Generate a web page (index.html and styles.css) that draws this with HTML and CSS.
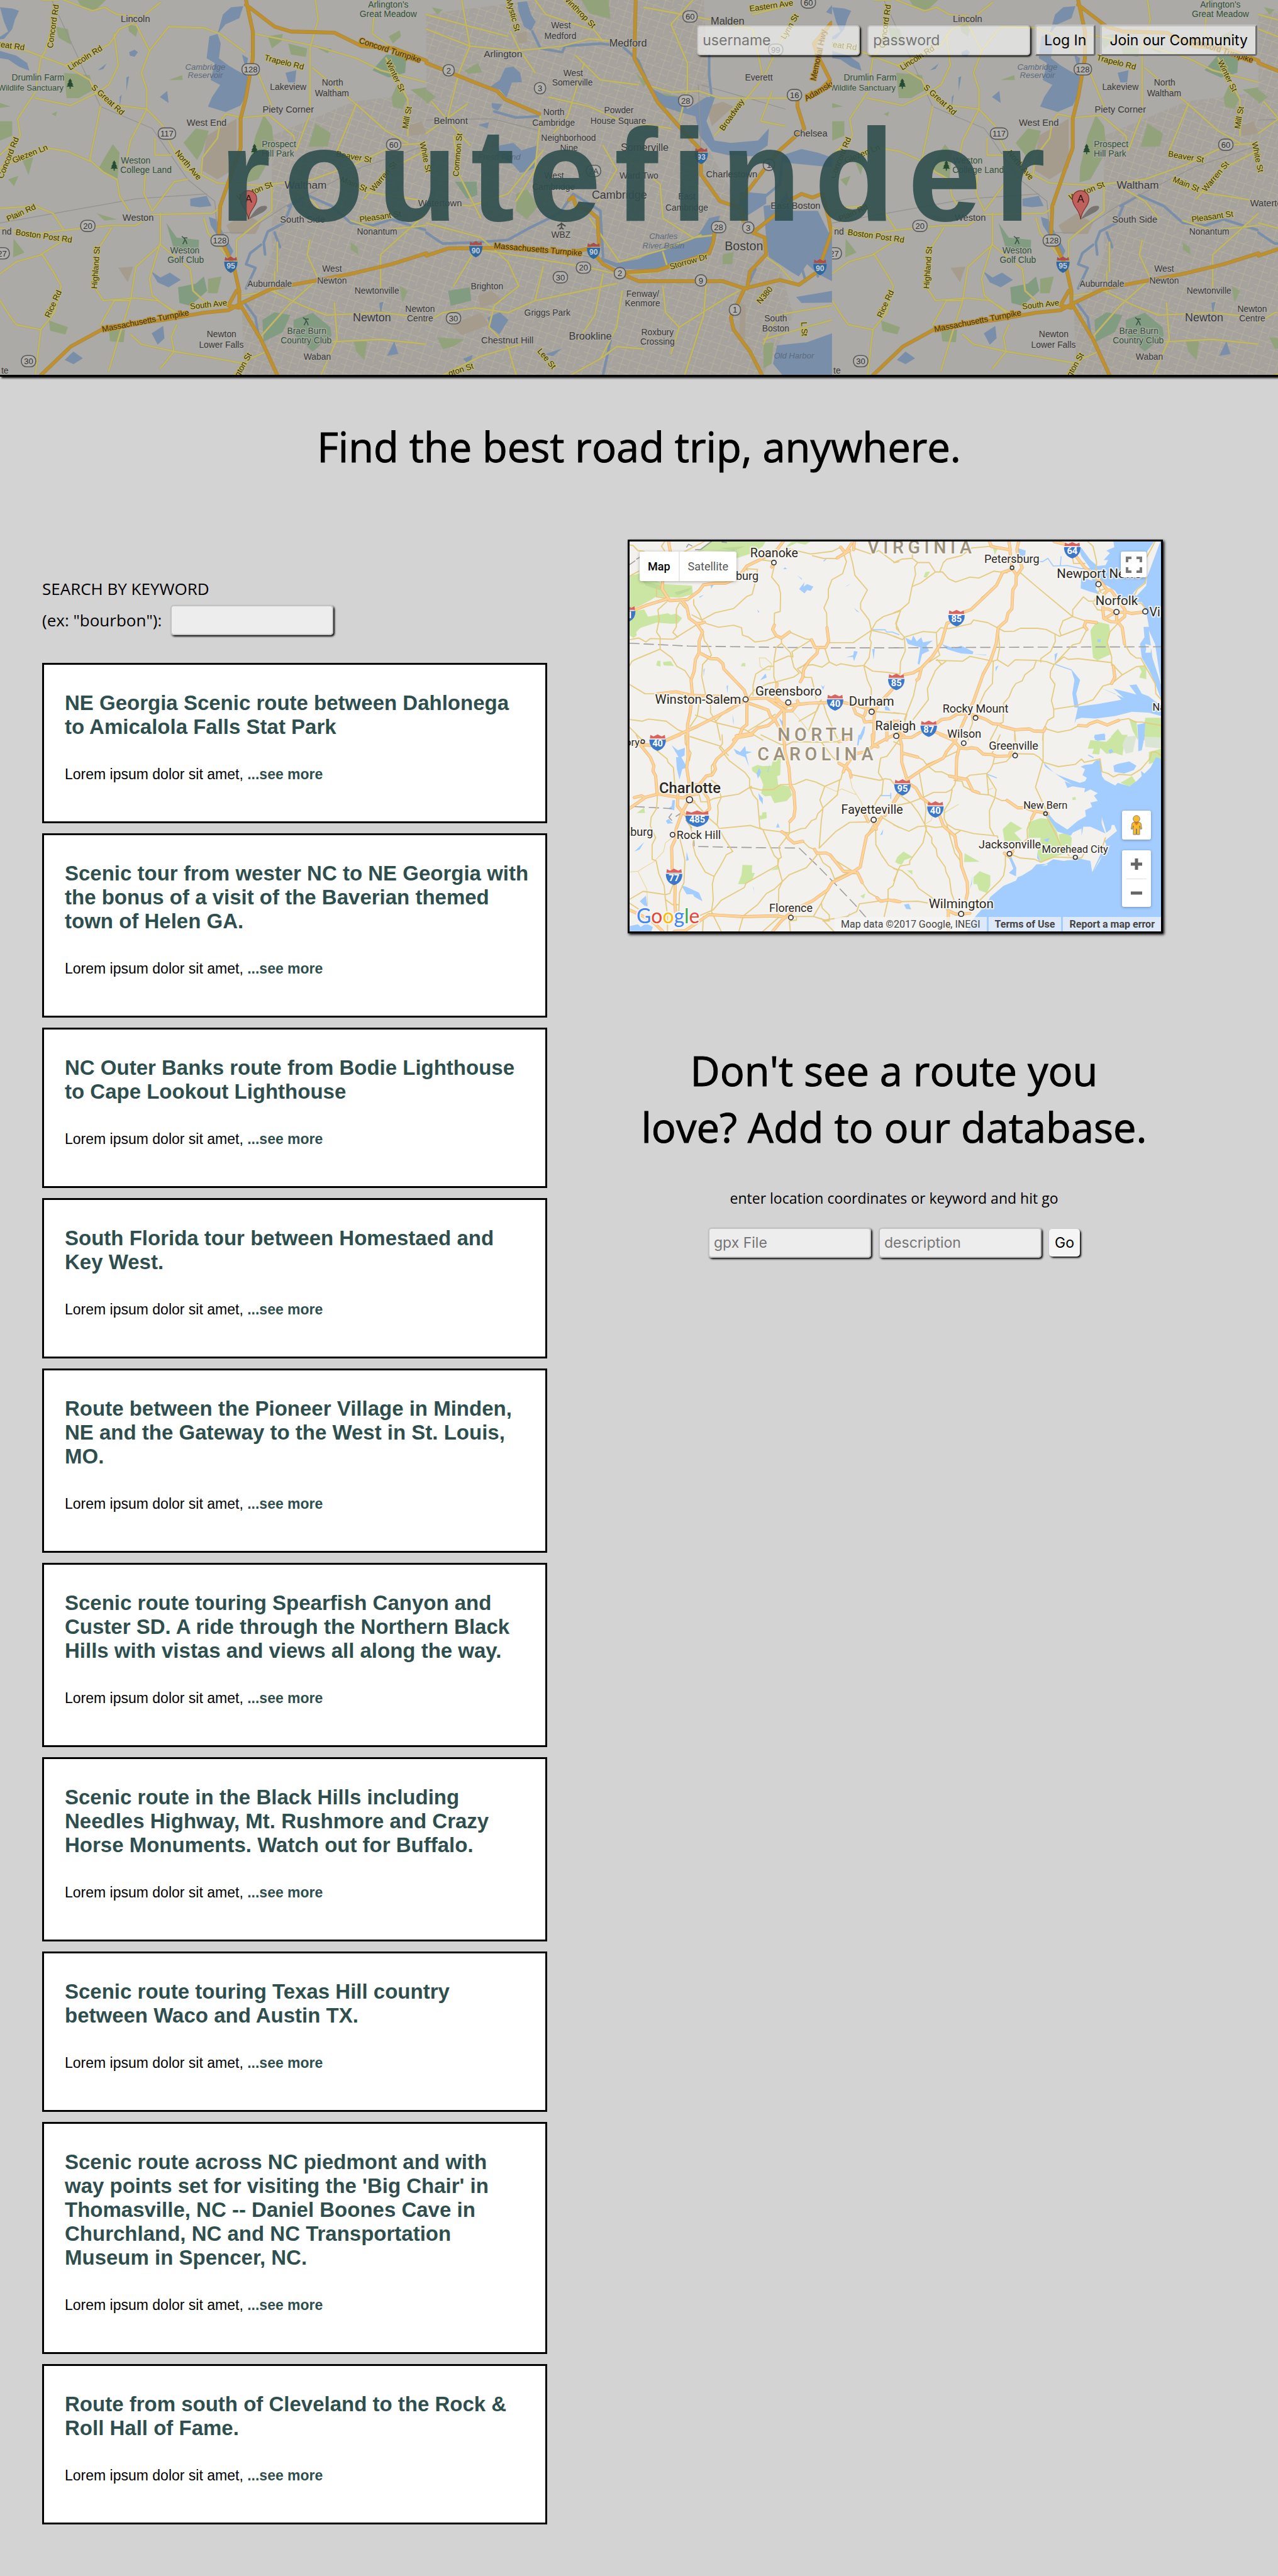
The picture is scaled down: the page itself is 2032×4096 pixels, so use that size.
FILE: index.html
```html
<!DOCTYPE html>
<html lang="en">
<head>
<meta charset="utf-8">
<meta name="viewport" content="width=device-width, initial-scale=1">
<title>routefinder</title>
<link rel="stylesheet" href="styles.css">
</head>
<body>
<header class="banner">
  <svg class="banner-map" id="banner-map" viewBox="0 0 2488 730" preserveAspectRatio="xMinYMin slice" aria-hidden="true"></svg>
  <form class="login">
    <input class="field" type="text" placeholder="username" aria-label="username">
    <input class="field" type="password" placeholder="password" aria-label="password">
    <button class="bevel" type="button">Log In</button>
    <button class="bevel" type="button">Join our Community</button>
  </form>
  <h1 class="brand">routefinder</h1>
</header>

<main>
  <h2 class="headline">Find the best road trip, anywhere.</h2>
  <div class="columns">
    <section class="routes">
      <form class="search">
        <label class="search-label" for="keyword">SEARCH BY KEYWORD</label>
        <div class="search-row">
          <label for="keyword">(ex: "bourbon"):</label>
          <input class="field" id="keyword" type="text">
        </div>
      </form>
      <article class="card"><h3>NE Georgia Scenic route between Dahlonega to Amicalola Falls Stat Park</h3><p>Lorem ipsum dolor sit amet, <a href="#">...see more</a></p></article>
      <article class="card"><h3>Scenic tour from wester NC to NE Georgia with the bonus of a visit of the Baverian themed town of Helen GA.</h3><p>Lorem ipsum dolor sit amet, <a href="#">...see more</a></p></article>
      <article class="card"><h3>NC Outer Banks route from Bodie Lighthouse to Cape Lookout Lighthouse</h3><p>Lorem ipsum dolor sit amet, <a href="#">...see more</a></p></article>
      <article class="card"><h3>South Florida tour between Homestaed and Key West.</h3><p>Lorem ipsum dolor sit amet, <a href="#">...see more</a></p></article>
      <article class="card"><h3>Route between the Pioneer Village in Minden, NE and the Gateway to the West in St. Louis, MO.</h3><p>Lorem ipsum dolor sit amet, <a href="#">...see more</a></p></article>
      <article class="card"><h3>Scenic route touring Spearfish Canyon and Custer SD. A ride through the Northern Black Hills with vistas and views all along the way.</h3><p>Lorem ipsum dolor sit amet, <a href="#">...see more</a></p></article>
      <article class="card"><h3>Scenic route in the Black Hills including Needles Highway, Mt. Rushmore and Crazy Horse Monuments. Watch out for Buffalo.</h3><p>Lorem ipsum dolor sit amet, <a href="#">...see more</a></p></article>
      <article class="card"><h3>Scenic route touring Texas Hill country between Waco and Austin TX.</h3><p>Lorem ipsum dolor sit amet, <a href="#">...see more</a></p></article>
      <article class="card"><h3>Scenic route across NC piedmont and with way points set for visiting the 'Big Chair' in Thomasville, NC -- Daniel Boones Cave in Churchland, NC and NC Transportation Museum in Spencer, NC.</h3><p>Lorem ipsum dolor sit amet, <a href="#">...see more</a></p></article>
      <article class="card"><h3>Route from south of Cleveland to the Rock &amp; Roll Hall of Fame.</h3><p>Lorem ipsum dolor sit amet, <a href="#">...see more</a></p></article>
    </section>

    <section class="explore">
      <div class="map">
        <svg class="map-canvas" id="route-map" viewBox="1226 1054 1034 758" preserveAspectRatio="xMidYMid slice" aria-hidden="true"></svg>
        <div class="map-types">
          <button class="map-type current" type="button">Map</button>
          <button class="map-type" type="button">Satellite</button>
        </div>
        <button class="map-control fullscreen" type="button" aria-label="Toggle fullscreen">
          <svg viewBox="0 0 26 26" width="26" height="26"><path d="M2 9V2h7M17 2h7v7M24 17v7h-7M9 24H2v-7" fill="none" stroke="#777" stroke-width="4"/></svg>
        </button>
        <button class="map-control pegman" type="button" aria-label="Street view">
          <svg viewBox="0 0 18 32" width="18" height="32"><path d="M5 11h8l3 2 1.500 9-2 .5L14 17v14H9.500v-9h-1v9H4V17l-1.500 5.500-2-.5L2 13z" fill="#fbbb2d" stroke="#6d6a5f" stroke-width=".8"/><path d="M5 11.500h8l-4 5z" fill="#e3781c"/><circle cx="9" cy="6" r="5.300" fill="#fbbb2d" stroke="#6d6a5f" stroke-width=".8"/></svg>
        </button>
        <div class="map-control zoom">
          <button type="button" aria-label="Zoom in"><svg viewBox="0 0 18 18" width="18" height="18"><path d="M9 0v18M0 9h18" stroke="#666" stroke-width="5"/></svg></button>
          <button type="button" aria-label="Zoom out"><svg viewBox="0 0 18 18" width="18" height="18"><path d="M0 9h18" stroke="#666" stroke-width="5"/></svg></button>
        </div>
        <div class="map-legal">
          <span>Map data ©2017 Google, INEGI</span>
          <a href="#">Terms of Use</a>
          <a href="#">Report a map error</a>
        </div>
      </div>
      <div class="contribute">
        <h2>Don't see a route you<br>love? Add to our database.</h2>
        <p>enter location coordinates or keyword and hit go</p>
        <form class="contribute-form">
          <input class="field" type="text" placeholder="gpx File" aria-label="gpx File">
          <input class="field" type="text" placeholder="description" aria-label="description">
          <button class="go" type="button">Go</button>
        </form>
      </div>
    </section>
  </div>
</main>
<script src="maps.js"></script>
</body>
</html>
```
FILE: styles.css
```css
* { box-sizing: border-box; }

body {
  margin: 0;
  background: #d3d3d3;
  color: #000;
  font-family: "Open Sans", "Noto Sans", sans-serif;
}

h1, h2, h3, p { margin: 0; font-weight: 400; }

/* Banner */
.banner {
  position: relative;
  padding: 39px 33px 197px;
  border-bottom: 3px solid #000;
  box-shadow: 2px 2px 3px #000;
}
.banner-map {
  position: absolute;
  inset: 0;
  width: 100%;
  height: 100%;
  background: #abaaa6;
}
.banner-map text { font-family: "Liberation Sans", Arial, sans-serif; }
.login {
  position: relative;
  display: flex;
  justify-content: flex-end;
  align-items: center;
  gap: 7px;
}
.login .field + .field { margin-left: 5px; }
.brand {
  position: relative;
  margin-top: 70px;
  text-align: center;
  font: 700 209px/240px "Liberation Sans", Arial, sans-serif;
  letter-spacing: 21px;
  font-variant-ligatures: none;
  color: rgba(47, 79, 79, .9);
}

/* Form controls */
.field, .bevel, .go {
  font-family: Inter, Roboto, sans-serif;
  font-size: 23px;
  line-height: 28px;
  color: #000;
}
.field {
  width: 259px;
  height: 48px;
  padding: 0 7px;
  border: 2px solid #c2c2c2;
  border-radius: 5px;
  background: rgba(255, 255, 255, .6);
  background-clip: padding-box;
  box-shadow: 2px 2px 3px #000;
}
.login .field { border-color: rgba(215, 215, 215, .5); }
.field::placeholder { color: #757575; opacity: 1; }
.bevel {
  height: 50px;
  padding: 0 12px;
  border: 3px solid;
  border-color: #c0c0c0 #6f6f6f #6f6f6f #bcbcbc;
  border-radius: 4px;
  background: rgba(255, 255, 255, .6);
  background-clip: padding-box;
}
.go {
  height: 44px;
  padding: 0 9px;
  border: 0;
  border-radius: 5px;
  background: #f5f5f5;
  box-shadow: 2px 2px 3px #000;
}

/* Page body */
.headline, .contribute h2 {
  font-size: 65px;
  line-height: 90px;
  text-align: center;
  -webkit-text-stroke: 1px #000;
}
.headline { margin: 66px 0 103px; }
.columns {
  display: grid;
  grid-template-columns: minmax(0, 803fr) minmax(0, 851fr);
  align-items: start;
  gap: 128px;
  padding: 0 183px 84px 67px;
}
.routes {
  display: flex;
  flex-direction: column;
  gap: 16px;
  padding-top: 60px;
}
.search {
  margin-bottom: 28px;
  font-size: 26px;
  line-height: 36px;
}
.search-label { display: block; margin-bottom: 8px; }
.search-row { display: flex; align-items: center; gap: 14px; }

.card {
  padding: 42px 24px 61px 33px;
  border: 3px solid #000;
  background: #fff;
  font-family: "Liberation Sans", Arial, sans-serif;
}
.card h3 {
  margin-bottom: 43px;
  font-size: 33px;
  line-height: 38px;
  font-weight: 700;
  color: #2f4f4f;
}
.card p { font-size: 23px; line-height: 27px; }
.card a { color: #2f4f4f; font-weight: 700; text-decoration: none; }

/* Map */
.map {
  position: relative;
  aspect-ratio: 851 / 626;
  overflow: hidden;
  border: 3px solid #000;
  box-shadow: 2px 2px 4px #000;
  font-family: Roboto, sans-serif;
}
.map-canvas {
  display: block;
  width: 100%;
  height: 100%;
  background: #f2f1ed;
}
.map-canvas text { font-family: Roboto, sans-serif; }
.map-canvas .logo { font-family: Lato, sans-serif; }
.map button { border: 0; background: none; padding: 0; font-family: inherit; }
.map-types {
  position: absolute;
  top: 16px;
  left: 16px;
  display: flex;
  border-radius: 3px;
  background: #fff;
  box-shadow: 0 1px 5px rgba(0, 0, 0, .3);
}
.map .map-type {
  height: 47px;
  padding: 0 13px;
  font-size: 18px;
  line-height: 24px;
  color: #565656;
}
.map .map-type.current {
  border-right: 2px solid #e8e8e8;
  font-weight: 500;
  color: #000;
}
.map .map-control {
  position: absolute;
  display: flex;
  align-items: center;
  justify-content: center;
  border-radius: 3px;
  background: #fff;
  box-shadow: 0 1px 4px rgba(0, 0, 0, .3);
}
.map .fullscreen { top: 16px; right: 23px; width: 41px; height: 41px; }
.map .pegman { right: 16px; bottom: 146px; width: 46px; height: 46px; }
.map .zoom {
  right: 16px;
  bottom: 39px;
  flex-direction: column;
  width: 46px;
  height: 90px;
}
.zoom button {
  display: flex;
  flex: 1;
  align-items: center;
  justify-content: center;
  width: 32px;
}
.map .zoom button + button { border-top: 1px solid #e0e0e0; }
.map-legal {
  position: absolute;
  right: 0;
  bottom: 0;
  display: flex;
  gap: 3px;
  font-size: 16px;
  line-height: 23px;
  color: #444;
}
.map-legal > * {
  padding: 0 10px;
  background: rgba(245, 245, 245, .7);
  color: #444;
  text-decoration: none;
}
.map-legal a { font-weight: 700; }

/* Contribute */
.contribute { margin: 173px 4px 0 0; text-align: center; }
.contribute p { margin: 53px 0 31px; font-size: 23px; line-height: 31px; }
.contribute-form {
  display: flex;
  justify-content: center;
  align-items: center;
  gap: 12px;
}
```
FILE: maps.js
```js
// Draws the two road maps. Each sheet lists its features in its own grid;
// x, y, sx, sy place that grid on the map.
const NS = 'http://www.w3.org/2000/svg';

function el(parent, name, attrs, text) {
  const node = document.createElementNS(NS, name);
  for (const key in attrs) node.setAttribute(key, attrs[key]);
  if (text) node.textContent = text;
  parent.append(node);
  return node;
}
const px = (s, x) => s.x + x * s.sx;
const py = (s, y) => s.y + y * s.sy;

// "x,y x,y | x,y x,y" -> path data in map units
function trace(s, lines, close) {
  return lines.trim().split('|').map(line => 'M' + line.trim().split(/\s+/).map(p => {
    const [x, y] = p.split(',').map(Number);
    return px(s, x).toFixed(1) + ',' + py(s, y).toFixed(1);
  }).join('L') + (close ? 'Z' : '')).join('');
}
function fill(g, s, lines, color) {
  if (lines) el(g, 'path', { d: trace(s, lines, true), fill: color });
}
function stroke(g, s, lines, color, width, dash) {
  if (!lines) return;
  const a = { d: trace(s, lines), fill: 'none', stroke: color, 'stroke-width': width, 'stroke-linejoin': 'round', 'stroke-linecap': dash ? 'butt' : 'round' };
  if (dash) a['stroke-dasharray'] = dash;
  el(g, 'path', a);
}
function shield(g, x, y, text, w, font, colors) {
  const h = 16, k = w / 2;
  el(g, 'path', { d: `M${x - k},${y - 6} L${x + k},${y - 6} Q${x + k},${y + 11} ${x},${y + h} Q${x - k},${y + 11} ${x - k},${y - 6}Z`, fill: colors[0] });
  el(g, 'path', { d: `M${x - k + 1},${y - 8} L${x - k + 2},${y - 15} L${x - k / 2},${y - 12} L${x},${y - 16} L${x + k / 2},${y - 12} L${x + k - 2},${y - 15} L${x + k - 1},${y - 8}Z`, fill: colors[1] });
  el(g, 'text', { x, y: y + 8, 'text-anchor': 'middle', 'font-size': font, 'font-weight': 700, fill: colors[2] }, text);
}

/* ---------- Banner: greater Boston, repeated across the width ---------- */
const west = { x: 0, y: 0, sx: .5293, sy: .4719 };
const east = { x: 830, y: 0, sx: .5293, sy: .4719 };

const boston = [
  { s: west,
    water: `0,30 45,35 70,45 55,80 45,120 15,160 0,162 0,152 30,130 15,90 | 0,210 60,230 100,260 108,292 70,275 30,245 0,240 | 770,150 800,140 812,180 805,240 840,270 870,290 920,320 905,390 885,435 830,462 765,440 780,400 810,350 775,330 790,260 760,240 | 800,140 820,60 850,30 895,25 880,75 830,100 | 475,215 495,205 507,215 495,234 478,230 | 360,290 392,262 380,285 | 1050,300 1090,290 1085,340 1060,340 | 588,400 615,375 620,425 | 465,320 475,315 465,375 | 440,400 448,390 440,440 | 700,820 760,808 778,850 735,855 700,850 | 768,895 795,905 820,960 858,1035 845,1065 810,990 775,930 | 555,1118 590,1145 625,1125 665,1155 620,1185 580,1165 | 238,1485 270,1450 305,1478 270,1502 | 558,1375 600,1345 605,1395 580,1422 | 1424,1468 1450,1408 1465,1460 | 890,225 912,240 905,290 | 1395,1250 1410,1245 1400,1300`,
    river: `1070,850 1045,920 985,955 970,1000 975,1050 | 960,1010 920,1045 905,1090 940,1105 905,1190 | 900,1250 940,1310 950,1380 | 1010,960 1030,1020 | 1060,850 1130,805 1220,850 1290,920 1370,930 1440,905 1568,950`,
    park: `205,110 250,120 262,185 215,155 | 470,100 510,110 500,152 475,130 | 285,0 390,0 350,42 300,30 | 235,300 330,310 345,370 290,405 245,405 | 385,650 415,595 440,630 432,742 380,712 365,690 | 675,590 720,530 768,540 745,620 725,660 | 912,690 940,560 970,475 1000,520 1010,620 950,740 910,752 | 1135,605 1160,510 1217,550 1205,605 | 985,150 1040,140 1035,170 1000,200 | 1060,180 1130,200 1125,235 1070,225 | 1440,400 1460,350 1500,400 1480,450 1445,440 | 0,500 45,500 45,560 0,580 | 30,740 68,725 52,768 | 80,655 122,650 105,722 | 50,985 90,1042 48,1062 | 765,1150 815,1140 800,1210 765,1210 | 180,1322 250,1350 240,1380 185,1365 | 400,1360 460,1360 455,1412 405,1408 | 1300,1400 1350,1410 1340,1485 1310,1450 | 620,330 670,310 672,330 | 1510,370 1568,360 1568,420 | 1290,1000 1315,1020 1318,1050 1290,1030 | 190,470 210,460 205,480 | 355,880 430,905 385,910 | 0,425 40,440 0,445 | 1430,150 1470,125 1475,150 1445,180 | 1470,1180 1500,1200 1480,1250 | 1170,200 1220,200 1205,220`,
    wood: `1370,290 1420,225 1495,230 1490,300 1430,320 | 612,920 650,980 732,990 730,1042 640,1030 | 655,1185 720,1170 750,1140 762,1200 700,1262 660,1250 | 965,1320 1010,1288 1068,1300 1040,1370 970,1410 | 1080,1320 1150,1290 1215,1350 1220,1385 1150,1450 1080,1380`,
    tint: `832,930 900,880 960,920 940,965 850,965 | 435,1105 490,1100 470,1165 | 1500,520 1550,500 1568,550 1510,562 | 760,560 870,490 870,690 800,740 740,700`,
    urban: `1000,560 1300,420 1568,380 1568,1548 900,1548 890,1300 1000,1050`,
    rail: `190,0 370,440 560,530 690,740 790,830 800,960 900,960 1050,850 1330,690 1568,600 | 0,920 500,820 760,800`,
    road: `155,0 215,0 | 235,0 340,45 385,30 430,60 500,65 | 215,20 165,215 150,240 130,380 65,490 75,560 0,640 | 0,180 100,210 240,270 330,330 350,380 400,430 540,450 600,520 620,580 680,700 740,720 800,755 960,765 1150,740 1300,680 1450,600 1568,590 | 240,270 400,185 440,120 500,90 590,10 | 500,100 550,210 520,300 540,370 540,450 480,580 460,690 | 550,210 620,110 750,115 810,140 900,215 | 130,405 260,435 360,380 400,350 435,270 420,140 | 370,440 330,660 380,710 430,740 440,810 475,870 | 0,690 170,610 250,625 330,665 | 0,860 130,850 195,880 235,950 | 0,940 110,970 235,950 410,930 500,930 560,885 780,880 820,850 | 560,870 640,750 690,740 | 535,700 530,800 560,870 | 630,640 570,640 570,570 | 410,940 400,960 365,1020 345,1180 380,1240 500,1230 580,1240 650,1290 | 590,880 590,1010 500,1100 480,1240 440,1380 400,1530 | 590,1010 700,1110 710,1200 750,1240 | 590,1000 550,1150 560,1220 640,1290 | 155,1050 195,1120 225,1180 200,1290 150,1360 130,1548 | 155,1050 60,1080 0,1130 | 235,990 150,1050 | 750,900 765,960 830,1050 | 740,720 745,650 800,570 810,500 830,470 890,485 990,475 1080,560 1090,620 | 940,140 1160,190 1310,240 1400,290 1568,340 | 1160,0 1170,80 1140,200 1140,470 1090,620 | 1150,280 1310,430 1420,540 1500,590 | 1310,430 1240,620 | 1420,240 1500,410 1500,560 | 1380,0 1370,140 1460,210 | 920,220 960,330 1000,440 | 1000,770 1000,870 870,990 870,1080 | 1060,770 1150,830 1200,900 | 1250,740 1340,790 1568,830 | 1290,910 1400,950 1568,930 | 1340,820 1430,700 1568,620 | 890,1220 1000,1200 1110,1260 1200,1300 1400,1290 1568,1310 | 950,1400 1060,1260 1170,1150 1130,1050 1140,990 | 1010,1120 1010,1210 | 1568,880 1400,1050 1400,1200 | 650,1340 630,1390 640,1450 750,1470 900,1500 | 480,1380 520,1420 640,1450 590,1520 | 860,1548 920,1480 980,1450 | 0,1240 40,1310 60,1340 150,1360 | 1020,1000 1020,1120 | 1230,1250 1240,1400 1180,1548 | 1220,1410 1400,1400 1568,1420 | 480,1240 420,1240 370,1340`,
    freeway: `905,0 930,130 930,240 905,400 885,490 885,610 850,720 810,850 805,970 860,1100 880,1200 880,1250 960,1400 1020,1548 | 905,20 1010,110 1070,130 1230,135 1330,190 1450,200 1568,250 | 150,1548 260,1430 390,1350 600,1320 750,1290 840,1280 890,1250 1000,1190 1150,1160 1290,1130 1440,1090 1568,1045 | 870,1200 840,1260 880,1270`,
    places: [['Lincoln',498,90,18],['North',1223,354,17],['Waltham',1221,397,17],['Lakeview',1060,370,17],['Piety Corner',1060,465,18],['West End',760,520,18],['Waltham',1124,778,21],['Weston',508,912,18],['South Side',1113,918,18],['Nonantum',1387,968,17],['Auburndale',992,1184,17],['West',1221,1122,17],['Newton',1221,1170,17],['Newtonville',1386,1212,17],['Newton',1368,1327,22],['Newton',1545,1287,17],['Centre',1545,1327,17],['Newton',815,1392,17],['Lower Falls',814,1435,17],['Waban',1167,1484,17],['nd',25,968,17],['te',18,1541,17]],
    parks: [["Arlington's",1428,32,17],['Great Meadow',1428,70,17],['Drumlin Farm',140,333,17],['Wildlife Sanctuary',113,373,16],['Prospect',1026,608,17],['Hill Park',1022,646,17],['Weston',499,675,17],['College Land',537,713,17],['Weston',680,1046,17],['Golf Club',683,1084,17],['Brae Burn',1128,1378,17],['Country Club',1126,1416,17]],
    lakes: [['Cambridge',755,288,16],['Reservoir',755,322,16]],
    streets: [['Concord Rd',205,110,-82],['reat Rd',40,200,8],['Lincoln Rd',318,248,-32],['S Great Rd',390,420,42],['Trapelo Rd',1043,268,14],['Concord Turnpike',1432,218,18],['Winter St',1445,318,64],['Mill St',1507,487,-80],['Glezen Ln',114,645,-22],['Concord Rd',40,655,-68],['North Ave',685,688,50],['Weston St',940,798,-22],['Beaver St',1300,658,10],['Warren St',1418,735,-50],['Main St',1298,770,22],['Pleasant St',1400,905,-8],['Plain Rd',82,888,-25],['Boston Post Rd',160,985,8],['Highland St',362,1105,-86],['Rice Rd',205,1258,-65],['South Ave',768,1268,-6],['Massachusetts Turnpike',537,1335,-11],['gton St',903,1510,-60],['White St',1555,650,78]],
    routes: [['128',922,286],['117',614,551],['128',808,992],['60',1448,597],['20',323,932],['27',8,1045],['30',105,1490]],
    interstates: [['95',849,1092]]
  },
  { s: east,
    water: `335,10 370,5 385,60 402,90 385,127 360,110 340,50 | 235,358 270,330 290,280 320,275 345,300 352,340 315,340 295,402 270,370 | 240,425 280,430 262,456 242,445 | 270,600 320,590 350,620 410,600 400,690 375,705 345,712 320,680 260,640 | 190,515 230,505 225,530 | 820,360 880,395 940,400 960,450 1030,400 1062,400 1030,500 1060,580 1120,590 1220,580 1260,530 1255,600 1200,645 1110,640 1050,625 1005,560 990,480 930,462 870,440 | 1310,640 1380,615 1440,630 1492,650 1492,690 1400,680 1310,670 | 1240,850 1300,840 1325,790 1340,840 1340,870 1440,870 1480,960 1492,930 1492,1160 1440,1130 1400,1090 1370,1140 1340,1120 1260,1060 1250,980 | 640,1060 700,1085 780,1070 870,1020 1000,970 1040,900 1080,890 1060,970 1045,1040 900,1100 850,1117 710,1108 650,1080 | 1492,1375 1400,1412 1290,1425 1275,1500 1310,1548 1492,1548 | 1360,1225 1492,1200 1492,1248 1380,1250 | 225,1310 270,1288 302,1320 268,1380 235,1350 | 435,1462 498,1438 465,1470 | 1155,790 1250,800 1250,840 1180,890 1150,850 | 1492,20 1470,50 1492,60 | 135,1480 170,1465 160,1510`,
    river: `390,130 420,200 500,215 510,190 640,180 720,190 780,250 825,370 | 0,960 60,1005 180,1000 300,990 380,940 490,880 540,800 640,870 650,1060 | 1040,230 1040,310 1050,410 | 650,1548 680,1390 | 250,460 330,485 410,480 | 1380,1100 1395,1160 | 1430,1090 1440,1140 | 1210,1110 1190,1160 | 1225,830 1300,760 1310,650`,
    park: `570,0 670,0 677,77 600,55 | 330,800 370,780 412,850 370,905 330,870 | 40,1392 140,1400 100,1430 60,1440 | 140,292 190,260 205,298 155,305 | 1240,1415 1278,1415 1270,1500 1240,1520 | 1090,1050 1130,1040 1125,1090 1090,1090 | 850,380 940,400 920,430 870,420 | 0,370 35,400 0,430 | 770,300 810,340 800,360 | 20,30 60,40 40,60`,
    wood: `105,750 185,750 188,805 150,820 | 80,1200 160,1185 165,1240 90,1262`,
    tint: `90,1340 200,1290 232,1340 130,1382 | 190,1220 240,1200 282,1240 200,1270 | 1030,440 1090,420 1130,440 1050,520 | 1155,1250 1175,1260 1172,1400 1150,1400 | 330,140 370,130 370,175 340,180`,
    urban: `0,60 400,0 1020,0 1040,400 1010,560 1160,860 1250,1000 1300,1100 1350,1300 1240,1548 0,1548`,
    rail: `0,495 240,490 420,540 | 1000,350 1010,560 1000,760 | 1010,350 1200,410 1320,450 | 640,1070 560,1050`,
    road: `0,120 160,190 330,210 500,190 600,160 765,180 | 130,0 160,190 120,300 80,480 | 0,550 150,430 | 310,130 340,200 400,300 | 400,0 440,60 600,120 | 520,0 600,100 650,170 | 0,60 130,100 300,150 | 420,480 400,700 330,830 | 450,400 600,440 720,500 900,530 | 550,230 640,330 780,350 | 580,260 520,480 460,560 | 810,350 900,380 1000,375 1080,405 1340,405 | 960,370 930,500 | 980,0 900,100 960,260 960,370 | 1040,80 1200,120 1240,330 | 1060,560 1160,430 1240,320 1340,90 | 1200,60 1340,20 | 100,560 120,720 200,900 | 650,600 700,700 630,830 | 720,640 860,760 870,900 980,980 1060,970 | 0,920 200,980 300,1080 340,1180 | 200,1030 580,1100 700,1130 780,1130 860,1120 | 710,1080 600,900 | 870,1040 885,1095 | 710,1080 870,1030 1010,970 | 340,1180 250,1260 230,1350 | 0,1330 60,1290 180,1270 300,1290 400,1240 530,1210 700,1170 | 400,1240 430,1100 | 640,1480 700,1350 720,1200 | 530,1548 640,1480 700,1430 800,1440 | 60,1548 200,1470 350,1420 | 900,1460 930,1350 1100,1230 1150,1200 | 870,1180 880,1290 930,1350 | 1250,1060 1300,1100 1360,1180 | 1240,1400 1492,1320 | 1030,1160 1020,1300 950,1548 | 1270,380 1230,500 1320,520 | 0,830 160,850 300,800 430,620 | 160,600 20,420 | 650,1130 620,1300 560,1400 | 800,30 1040,80 | 1492,1260 1290,1300 1240,1420 | 180,1030 100,1180 | 330,1548 300,1430 230,1350`,
    freeway: `0,1055 80,1025 300,1022 420,1030 520,1045 600,1025 650,1090 710,1125 850,1115 1040,1045 1055,1000 1060,960 | 0,260 200,350 260,375 290,410 415,470 | 770,0 765,240 850,420 920,510 1010,620 1010,720 1080,830 1160,860 1165,910 | 710,1125 780,1160 1090,1160 1170,1190 1300,1155 1370,1175 1440,1120 1490,960 1480,900 1455,800 1420,815 1380,800 1330,830 | 1170,1190 1150,1240 1120,1310 1130,1360 1190,1450 1235,1548 | 1180,1190 1190,1120 1250,1050 1245,980 1200,960 1290,880 | 1160,820 1290,630 1390,530 1365,440 1365,400 | 1400,395 1450,370 1485,330 1440,230 1425,180 1490,95 | 525,825 540,812 550,850 600,870 630,900 635,1010`,
    places: [['West',495,118,17],['Medford',493,160,17],['Medford',742,192,20],['Arlington',282,235,19],['West',540,314,17],['Somerville',537,354,17],['Malden',1108,102,20],['Everett',1223,331,17],['Belmont',90,512,18],['North',469,475,17],['Cambridge',468,520,17],['Powder',708,468,17],['House Square',706,510,17],['Neighborhood',523,580,17],['Nine',525,622,17],['Somerville',803,622,20],['Chelsea',1413,564,18],['Ward Two',782,738,17],['West',470,738,17],['Cambridge',468,784,17],['Cambridge',710,820,22],['East',958,822,17],['Cambridge',958,868,17],['Charlestown',1123,732,18],['East Boston',1358,862,18],['Boston',1168,1032,24],['Brighton',223,1194,17],['Fenway/',796,1224,17],['Kenmore',795,1264,17],['Griggs Park',445,1303,17],['Chestnut Hill',298,1416,18],['Brookline',603,1400,20],['Roxbury',850,1382,17],['Crossing',850,1422,17],['South',1285,1325,17],['Boston',1285,1367,17],['Watertown',50,852,18],['WBZ',495,980,17]],
    parks: [],
    lakes: [['Fresh Pond',268,660,16],['Charles',872,987,16],['River Basin',872,1024,16],['Old Harbor',1352,1478,16]],
    streets: [['Mystic St',310,65,75],['Winthrop St',555,55,45],['Eastern Ave',1270,35,-8],['Lynn St',1345,115,-60],['Broadway',1132,480,-55],['Common St',125,640,-85],['Massachusetts Turnpike',410,1040,5],['Storrow Dr',967,1090,-16],['N380',1252,1225,-50],['L St',1380,1358,88],['Lee St',435,1487,50],['Adamski',1448,385,-30],['Memorial Hwy',1452,230,-78],['gton St',130,1536,-18]],
    routes: [['60',970,68],['60',1405,10],['2',82,290],['3',418,364],['28',954,415],['16',1354,392],['99',1285,205],['28',1075,937],['3',1184,939],['20',578,1104],['2',712,1127],['30',493,1144],['9',1010,1157],['1',1135,1278],['30',100,1313],['2A',615,705],['1',1260,680]],
    interstates: [['90',182,1028],['90',615,1035],['90',1448,1102],['93',1011,643]]
  }
];

function drawBoston(svg, dx, id) {
  const defs = el(svg, 'defs', {});
  const clip = el(defs, 'clipPath', { id });
  el(clip, 'rect', { x: 0, y: 0, width: 1620, height: 730 });
  const grid = el(defs, 'pattern', { id: id + '-grid', width: 34, height: 28, patternUnits: 'userSpaceOnUse', patternTransform: 'rotate(18)' });
  el(grid, 'path', { d: 'M0 8H34M0 20H20M9 0V28M24 8V28M24 8L34 0', fill: 'none', stroke: '#b8b39f', 'stroke-width': 1 });
  const g = el(svg, 'g', { transform: `translate(${dx} 0)`, 'clip-path': `url(#${id})` });
  // labels whose centre lies past the right edge are skipped
  const shown = (s, x) => px(s, x) + dx < 2488;
  el(g, 'rect', { x: 0, y: 0, width: 1620, height: 730, fill: '#abaaa6' });
  boston.forEach(m => {
    fill(g, m.s, m.urban, '#a6a29d');
    fill(g, m.s, m.urban, `url(#${id}-grid)`);
    fill(g, m.s, m.tint, '#a69c8d');
    fill(g, m.s, m.park, '#92a37b');
    fill(g, m.s, m.wood, '#829c82');
    fill(g, m.s, m.water, '#788ea9');
    stroke(g, m.s, m.river, '#788ea9', 5);
    stroke(g, m.s, m.rail, '#929291', 1.5);
    stroke(g, m.s, m.road, '#aea473', 4);
    stroke(g, m.s, m.road, '#c2b965', 2.6);
  });
  boston.forEach(m => stroke(g, m.s, m.freeway, '#a78843', 7.5));
  boston.forEach(m => stroke(g, m.s, m.freeway, '#be912e', 5.5));
  const label = (s, [text, x, y, size], color, halo, extra) => shown(s, x) && el(g, 'text', Object.assign({
    x: px(s, x), y: py(s, y), 'text-anchor': 'middle', 'font-size': size, fill: color,
    stroke: halo, 'stroke-width': 3, 'paint-order': 'stroke'
  }, extra), text);
  boston.forEach(m => {
    m.streets.forEach(([t, x, y, a]) => label(m.s, [t, x, y, 16], '#3a3318', /Turnpike|Adamski|Hwy/.test(t) ? '#be912e' : '#c2b965',
      { transform: `rotate(${a} ${px(m.s, x)} ${py(m.s, y)})` }));
    m.routes.filter(([, x]) => shown(m.s, x)).forEach(([t, x, y]) => {
      const cx = px(m.s, x), cy = py(m.s, y), w = 22 + 6 * (t.length - 1);
      el(g, 'rect', { x: cx - w / 2, y: cy - 11, width: w, height: 22, rx: 10, fill: '#b2b1ae', stroke: '#5a5a5a', 'stroke-width': 2 });
      el(g, 'text', { x: cx, y: cy + 6, 'text-anchor': 'middle', 'font-size': 16, fill: '#333' }, t);
    });
    m.interstates.filter(([, x]) => shown(m.s, x)).forEach(([t, x, y]) => shield(g, px(m.s, x), py(m.s, y), t, 26, 15, ['#2f689f', '#a94e4a', '#c5ccd4']));
    m.places.forEach(p => label(m.s, p, '#3a3937', '#aeaca8'));
    m.parks.forEach(p => label(m.s, p, '#32503b', '#aeaea6'));
    m.lakes.forEach(p => label(m.s, p, '#5d6b7d', 'none', { 'font-style': 'italic', 'stroke-width': 0 }));
  });
  // park trees, golf flags and the marker
  [[258, 345], [936, 615], [420, 683]].forEach(([x, y]) => {
    const a = px(west, x), b = py(west, y);
    el(g, 'path', { d: `M${a},${b - 10}l4,6h-2l4,6h-2l3,4h-6v4h-2v-4h-6l3,-4h-2l4,-6h-2z`, fill: '#274a33' });
  });
  [[680, 990], [1126, 1325]].forEach(([x, y]) => {
    const a = px(west, x), b = py(west, y);
    el(g, 'path', { d: `M${a - 6},${b - 7}l4,3h7M${a - 2},${b - 4}l4,6 2,6M${a},${b}l-4,8`, fill: 'none', stroke: '#3c5546', 'stroke-width': 2 });
  });
  const a = px(west, 914), b = py(west, 905);
  el(g, 'path', { d: `M${a},${b}l12,-16q10,-12 22,-10q6,4 -6,12q-14,8 -28,14z`, fill: '#5a5856', opacity: .65 });
  el(g, 'path', { d: `M${a},${b}c-2,-20 -16,-24 -16,-40a16,16 0 0 1 32,0c0,16 -14,20 -16,40z`, fill: '#c0605c', stroke: '#7a2f2c', 'stroke-width': 1.5 });
  el(g, 'text', { x: a, y: b - 33, 'text-anchor': 'middle', 'font-size': 20, fill: '#1e1111' }, 'A');
  el(g, 'path', { d: `M${px(east, 497)},${py(east, 918)}v10m-8,-3l8,-5 8,5m-12,6l4,-3 4,3`, fill: 'none', stroke: '#4c4a48', 'stroke-width': 2.5 });
}
const banner = document.getElementById('banner-map');
drawBoston(banner, 0, 'tile-a');
drawBoston(banner, 1620, 'tile-b');

/* ---------- Route map: the Carolinas ---------- */
const kx = .34439, ky = .33333;
const nw = { x: 1210, y: 1040, sx: kx, sy: ky }, ne = { x: 1740, y: 1040, sx: kx, sy: ky };
const sw = { x: 1210, y: 1430, sx: kx, sy: ky }, se = { x: 1740, y: 1430, sx: kx, sy: ky };

const carolinas = [
  { s: nw,
    park: `46,242 110,228 240,290 400,300 405,350 330,370 200,362 165,385 100,420 46,440 | 500,42 815,42 800,70 740,110 650,140 600,100 480,95 430,100 | 46,455 130,438 152,480 265,460 280,470 310,462 345,490 320,520 280,522 200,515 110,545 85,570 88,590 70,604 46,590 | 198,765 205,738 222,738 222,772 | 236,745 280,740 298,768 240,765 | 676,770 684,752 700,750 702,770 | 920,85 960,45 1010,42 1070,42 1040,60 990,50`,
    shade: `120,270 230,300 220,325 140,300 | 300,340 400,310 380,330 320,355 | 560,80 700,70 640,95`,
    water: `1005,320 1035,280 1030,305 1050,290 1085,305 1070,330 1050,325 1035,345 | 992,238 1020,258 1020,265 | 915,203 925,192 937,203 | 1262,308 1295,288 1280,300 | 440,365 468,352 445,370 | 505,295 522,295 508,318 | 785,852 815,812 822,835 | 697,852 745,838 | 1270,718 1310,705 1315,680 1335,685 1315,740 1308,715 | 1418,670 1432,668 1425,732 | 1315,430 1345,455 1330,450 | 595,885 604,880 600,930 | 155,855 178,875 | 628,1050 636,1085 634,1112 | 1128,878 1140,890 1150,878 1140,908 | 1370,1120 1378,1120 1372,1160 1355,1200 1340,1190 | 465,790 472,780 466,830 | 768,440 780,450 775,458 | 890,1070 915,1095 910,1120 | 48,1005 80,988 | 1485,990 1510,1010 1520,1030 1490,1025 | 420,1060 450,1075`,
    stream: `1420,557 1490,557 1500,570 1530,570 1568,585 | 1160,140 1145,155`,
    road: `46,62 68,66 95,95 130,100 | 246,42 228,70 245,95 | 46,245 100,215 | 470,42 340,110 | 232,290 200,320 200,365 260,372 | 715,210 700,200 770,205 755,290 740,350 710,362 635,433 530,458 455,500 400,470 | 410,380 410,410 440,460 460,510 | 800,150 870,160 850,250 890,300 900,345 898,450 866,460 864,530 | 945,85 1070,115 1190,100 1240,75 | 1080,125 1140,140 1220,142 | 1255,110 1272,160 1250,230 1190,265 1170,320 1170,370 1145,430 1160,460 1162,545 | 1290,100 1308,175 1320,240 1390,325 1352,400 1352,435 1400,500 1413,560 | 1310,80 1410,115 1455,95 1545,165 1568,160 | 1413,560 1440,510 1480,480 1568,450 | 1568,470 1550,520 1568,560 | 1413,560 1310,632 1175,632 | 1413,560 1500,580 1568,605 | 1413,560 1403,610 1412,630 1400,720 1370,765 1390,850 1412,900 1412,970 | 1370,765 1420,798 1500,805 1568,815 | 950,570 1040,610 1075,615 965,685 970,715 945,710 865,745 | 1150,665 1175,745 1215,765 1240,755 1320,770 1370,765 | 1175,745 1135,775 1080,760 1020,770 995,785 | 905,605 905,635 875,660 862,745 862,830 875,870 | 905,635 955,690 975,775 1005,810 975,832 870,862 830,870 755,905 720,950 | 1000,790 1040,835 1075,835 1090,900 1100,960 | 1010,780 1060,740 | 262,390 208,440 215,500 200,570 220,600 220,670 | 330,400 312,435 312,540 292,572 320,600 | 46,615 100,605 140,628 165,608 295,612 430,525 | 480,520 550,542 635,530 680,545 685,588 720,600 755,628 820,620 870,600 | 335,400 360,430 | 460,555 470,620 488,645 510,705 460,760 455,830 478,940 505,1000 505,1040 540,1100 560,1200 | 220,670 80,730 60,742 46,770 | 220,670 285,720 315,770 360,795 395,850 | 46,875 135,930 230,930 | 745,940 745,880 760,815 830,770 860,770 | 46,1080 120,1090 155,1078 255,1090 320,1140 375,1160 | 46,1125 120,1200 | 420,1055 540,1100 700,1140 800,1200 | 640,1000 600,1020 530,1095 | 1130,965 1105,1030 1005,1090 | 1125,970 1060,1140 | 1140,980 1160,1050 1220,1190 | 1440,1035 1568,1045 | 720,1145 870,1050 | 390,1120 430,1060 440,990`,
    lane: `780,720 815,722 850,755 840,790 805,790 785,770 780,720 | 965,1030 1000,1070 1060,1150`,
    highway: `268,42 278,105 | 915,42 880,90 790,145 710,185 680,225 640,262 590,285 530,285 465,295 440,330 375,380 275,387 232,320 235,275 | 80,440 140,415 265,375 | 345,385 370,420 385,490 425,520 450,520 470,512 | 425,520 460,570 440,625 440,690 420,730 412,800 395,850 402,930 390,1040 375,1110 375,1200 | 440,690 505,725 545,727 575,755 580,785 695,910 712,960 | 205,930 310,918 400,940 550,945 690,975 | 710,960 820,955 900,980 940,1000 1060,985 1160,982 1250,980 1320,995 1400,1020 | 700,970 600,1030 430,1120 255,1200 | 710,990 710,1110 685,1130 670,1170 635,1200 | 720,985 830,1025 845,1065 865,1080 915,1020 | 820,955 915,1020 | 870,1080 830,1115 770,1130 740,1160 650,1175 | 920,1025 920,1200 | 868,1080 895,1135 | 880,870 872,950 930,1010 | 925,1030 965,1030 1000,985 995,970 | 865,530 855,555 875,590 905,605 950,570 | 1075,615 1095,660 1155,660 1172,625 1162,545 | 1110,670 1105,695 1060,740 1030,790 1025,835 1012,860 | 1220,138 1290,95 | 1240,75 1265,110 1300,55 | 1318,42 1312,90 | 1530,905 1480,960 1430,1030 1425,1200 | 1310,1005 1325,1045 1365,1065 1375,1095 1430,1090 | 1375,1055 1385,1020 1430,1020 | 1500,1200 1500,1100 1568,1090 | 850,190 862,170`,
    border: `46,635 380,652 800,658 1100,662 1568,662`,
    range: `46,178 78,155 | 88,145 120,125 | 370,75 380,58 400,68 | 420,90 450,88 510,42 | 570,45 595,48`
  },
  { s: ne,
    park: `1145,510 1215,525 1220,560 1205,630 1225,700 1150,735 1125,720 1118,640 1110,560 | 1385,775 1425,772 1425,845 1385,835 1400,800 | 1420,1070 1510,1070 1510,1200 1400,1200 | 1330,1080 1370,1090 1378,1200 1350,1150 | 1225,1180 1265,1135 1310,1200 | 560,80 588,82 570,120 | 168,250 180,220 205,218 185,252`,
    water: `700,80 745,95 735,170 690,120 | 1030,55 1060,80 1110,150 1150,185 1195,180 1210,150 1185,150 1220,110 1200,95 1245,75 1240,42 1510,42 1510,965 1475,870 1440,790 1400,720 1390,640 1415,600 1410,540 1440,540 1425,450 1400,395 1290,390 1250,330 1205,300 1150,280 1140,320 1165,350 1110,335 1055,315 1058,250 1120,270 1110,200 1060,130 | 1040,1005 1150,990 1285,965 1250,930 1165,895 1300,955 1240,900 1335,925 1370,935 1330,880 1370,875 1400,930 1440,945 1510,1000 1510,1060 1440,1040 1345,1035 1250,1060 1140,1075 1060,1070 1030,1080 1020,1105 | 1000,785 1052,850 1030,930 1045,1010 1020,1010 1008,930 1020,850 | 65,602 100,620 110,590 130,625 155,600 165,630 220,620 185,650 200,680 160,700 145,760 135,755 150,660 80,640 | 270,640 340,665 380,650 450,685 445,700 380,695 300,670 | 450,700 522,702 522,706 | 0,555 60,605 | 530,545 575,550 | 600,570 680,598 | 695,655 748,670 | 925,690 908,700 910,750 | 812,525 840,540 | 575,775 592,765 575,800 | 1010,765 1030,740 | 1150,612 1168,612 1168,628 1150,628 | 925,1055 955,1075 | 1375,1110 1420,1100 1412,1200 1380,1200 | 1135,1170 1190,1162 1195,1200 1135,1200 | 590,965 602,1000 | 450,140 485,165`,
    stream: `735,130 745,150 840,160 870,140 900,185 980,182 1060,200 1110,200 | 915,760 1000,790 | 945,130 940,185`,
    land: `1430,100 1470,42 1505,42 1430,250 1425,300 1370,360 1350,345 1375,315 1420,280 | 1330,650 1350,640 1355,670 | 1420,640 1455,650 1450,690 1420,690 1425,670 | 1440,560 1475,640 1510,880 1460,720 | 1250,890 1270,895 1262,905`,
    road: `0,165 45,145 105,140 135,165 200,165 235,220 275,220 310,260 350,278 430,250 480,255 565,215 640,225 | 105,60 105,140 | 235,220 150,285 103,305 | 135,165 118,190 123,235 103,305 85,400 40,440 15,520 15,550 60,600 | 0,458 40,440 | 260,220 280,165 300,145 380,125 440,80 550,70 | 710,220 800,300 1010,480 1080,505 | 1010,480 1010,440 1070,365 1100,390 1130,390 1160,330 1200,315 | 1010,480 955,505 935,560 945,590 | 0,595 50,615 60,600 165,567 240,573 265,545 310,550 435,522 450,500 530,515 625,567 680,565 715,548 810,548 860,555 935,595 1075,540 | 60,600 65,680 38,745 35,815 | 240,573 245,660 260,705 200,745 | 240,735 390,740 430,712 560,740 585,732 645,770 685,732 800,735 860,742 905,760 960,715 985,730 1040,725 1225,748 1290,820 | 590,560 598,660 585,730 | 562,740 557,870 515,920 480,1000 | 805,735 790,780 740,820 725,855 690,870 670,900 650,950 620,985 618,1095 590,1110 545,1200 | 910,580 912,625 885,685 830,725 830,745 | 905,760 885,800 883,835 910,875 890,970 903,1020 903,1065 870,1085 850,1130 | 903,1020 1030,1000 1125,965 1180,885 1230,870 1290,820 1370,772 1415,768 | 1090,555 1050,635 1010,645 905,760 | 1265,520 1220,570 1205,630 1230,715 1230,765 | 1303,640 1335,695 1370,722 1395,722 1420,770 1475,870 1480,930 1510,965 | 270,755 235,795 190,900 195,965 110,1080 | 245,730 270,760 295,740 | 130,850 112,940 60,1080 | 0,1040 75,1050 60,1100 | 860,1135 925,1155 1000,1140 1045,1115 | 1268,1085 1325,1075 1365,1095 1400,1095 1510,1115 | 1425,250 1420,285 1375,320 1350,370 | 1095,42 1125,70 1145,160 1140,260 1170,340 | 440,1065 445,1100 430,1140 420,1200 | 1475,42 1430,130 | 683,1145 683,1200 | 845,1150 840,1200 | 495,370 580,300 | 1010,140 1015,170 1080,170 | 1350,410 1395,400 1425,440 | 1125,400 1150,440 1180,445`,
    highway: `540,42 552,72 655,90 665,180 | 650,42 658,90 | 705,42 695,90 705,140 725,195 695,240 | 668,200 692,235 690,295 672,325 667,435 645,460 635,505 590,545 578,640 545,740 505,815 450,975 405,1070 350,1200 | 665,205 615,222 580,298 435,440 400,452 | 315,512 300,520 270,630 220,710 155,780 110,808 60,818 | 155,785 142,840 130,850 | 1030,130 1075,190 1160,265 1205,325 1225,325 1305,440 1303,480 1265,512 1225,510 1185,490 1180,435 1210,435 1250,455 | 1210,325 1185,350 1180,440 | 1235,465 1190,492 | 1258,465 1258,510 | 1275,455 1320,455 1340,462 1420,452 | 1265,510 1290,545 1303,640 | 1145,515 1085,508 1075,535 1090,555 | 1240,770 1248,835 1230,870 | 245,1100 270,1080 315,1075 355,1050 420,1045 480,1065 520,1080 560,1105 595,1107 610,1120 685,1140 765,1135 790,1147 845,1150 855,1130 | 240,1155 350,1200 | 0,1170 30,1185 100,1185 150,1155 | 0,1090 60,1180 | 1045,1115 1090,1118 1105,1105 1150,1090 1205,1112 1268,1085 | 905,42 965,58`,
    border: `0,662 400,660 1100,657 1510,656`
  },
  { s: sw,
    park: `738,190 770,175 800,182 850,180 860,130 880,110 902,130 898,235 880,240 887,290 950,300 965,350 935,385 865,398 845,355 812,358 790,340 803,290 785,245 740,210 | 780,470 795,470 797,452 820,450 822,485 785,495 | 685,758 740,760 738,805 755,805 740,845 700,870 660,870 680,815 | 845,790 887,765 885,785 | 88,455 130,425 135,455 | 1350,940 1378,925 1370,955 | 1548,740 1568,712 1568,755`,
    water: `285,60 320,90 360,75 358,120 340,130 372,190 345,200 330,260 315,200 310,130 325,130 | 635,80 672,100 700,65 705,95 740,100 705,112 722,185 700,130 650,110 | 765,225 778,192 790,215 772,255 | 840,165 830,215 825,218 | 290,380 304,380 300,440 265,430 285,415 | 253,500 270,490 280,505 295,515 262,518 | 75,680 130,625 105,668 | 340,878 365,885 420,910 440,920 460,970 415,945 405,930 370,930 | 105,970 140,938 145,975 150,1000 130,995 120,985 | 46,1115 95,1105 110,1120 140,1100 180,1120 170,1146 46,1146 | 775,340 800,370 800,405 780,375 | 875,540 885,513 895,540 | 685,362 705,405 | 745,885 752,925 748,890 | 370,680 382,730 368,735 | 1340,0 1350,0 1340,62 1332,60 | 1010,177 1048,180 | 565,695 580,730 | 78,800 80,890 | 1370,800 1392,840 | 1462,585 1480,550 1475,580 | 1515,605 1525,615 | 1270,1070 1292,1035 1285,1060 | 1375,130 1385,110 1415,105 1395,130 | 917,268 922,285 | 365,620 370,640`,
    stream: `1462,354 1522,354 | 1522,340 1522,370`,
    road: `85,0 110,50 | 200,90 260,140 265,160 295,190 303,290 320,350 | 360,0 362,50 395,105 385,150 | 390,10 560,65 605,120 | 570,0 572,50 555,75 610,150 700,220 725,255 725,300 745,350 770,380 783,540 800,552 | 790,0 900,55 930,60 970,40 1130,42 1230,40 | 730,305 790,322 860,318 900,290 980,288 1045,260 1100,275 1150,300 1240,260 1255,200 | 1130,42 1195,130 1240,170 | 1235,260 1220,350 1140,425 1130,500 1118,660 | 1150,300 1122,380 1140,430 1110,460 1100,490 1075,500 1040,545 1015,547 950,572 | 560,545 730,528 800,552 900,565 950,572 950,510 | 440,345 450,390 485,390 520,372 565,362 665,345 735,300 | 510,240 510,180 540,140 | 510,265 545,290 565,365 545,410 548,450 543,520 | 495,485 545,530 580,600 630,680 595,698 560,765 525,825 515,870 520,960 510,1030 565,1146 | 410,390 465,450 | 380,500 410,600 405,640 420,700 475,800 525,825 | 205,360 200,430 170,480 165,530 195,600 175,640 175,725 198,735 213,810 243,880 250,960 262,1050 262,1146 | 330,600 345,660 360,730 355,860 330,920 325,1050 | 46,960 125,912 210,925 250,932 275,925 295,870 | 250,960 290,990 325,990 | 46,980 120,1030 | 800,552 865,705 890,728 885,760 910,855 890,900 887,1040 | 950,575 890,655 905,715 885,725 885,760 705,865 695,890 565,965 520,1020 430,1060 | 1110,695 1045,775 950,815 865,900 820,925 770,990 690,1055 665,1146 | 1118,660 1210,565 1290,510 1385,508 1470,480 1568,540 | 1118,700 1140,745 1180,775 1205,840 1290,800 | 1190,720 1300,790 | 1025,620 1060,655 1095,670 | 1170,900 1130,980 1085,1060 | 1130,980 1135,1010 1175,1050 1175,1085 1140,1085 | 970,1060 1085,1058 1150,1080 1270,1060 1330,1030 1345,985 1450,970 | 1360,860 1400,920 1450,950 | 1437,550 1438,640 1470,700 1510,760 1562,790 1535,880 1507,900 1507,960 1485,1060 | 1300,232 1460,265 1490,255 1520,260 1568,320 | 1568,30 1500,125 1465,135 1452,220 1480,265 1472,345 1445,380 1430,410 | 990,1065 990,1080 950,1085 955,1146 | 465,1060 460,1146 | 1420,530 1380,600 | 895,1060 800,1146 | 1130,1070 1200,1146`,
    lane: `1150,300 1215,330 1245,315 1330,350 1355,390 1380,450 | 1290,240 1305,310 1330,350 | 46,800 95,795 150,760 185,740 240,680 250,630 300,590 | 95,795 145,900 150,990`,
    highway: `375,0 378,130 370,190 385,290 | 110,60 165,130 185,180 180,210 195,240 203,340 | 46,50 180,62 | 250,35 330,0 | 740,0 660,15 620,70 540,140 525,170 533,200 515,232 480,240 445,285 | 75,365 115,355 130,365 210,345 350,368 380,352 430,345 | 46,430 130,370 | 320,340 318,415 350,455 390,490 | 380,385 345,450 310,550 310,600 285,655 288,780 | 305,870 303,980 308,1040 | 385,290 440,290 465,330 490,370 500,430 480,450 | 46,1020 160,1075 190,1100 235,1146 | 300,1146 360,1142 430,1095 495,1048 560,1052 690,1060 880,1055 930,1065 | 995,1010 930,1060 900,1090 855,1146 | 1005,1005 1080,968 1165,905 1190,862 1300,805 1350,770 1365,690 1385,590 1440,535 1470,480 | 1490,470 1568,350 | 1300,798 1335,805 1360,860 | 1305,798 1255,795 1215,745 1180,700 1155,688 1105,690 1092,668 | 1025,620 975,630 945,605 935,585 907,565 | 918,0 925,100 947,190 955,290 975,330 982,430 975,480 953,505 | 1230,165 1265,185 1290,210 1298,245 | 1255,215 1265,185 1300,135 1320,110 1380,98 1430,60 1500,20 1568,-10 | 1230,40 1290,20 | 1418,0 1420,60 1450,70 | 1370,450 1395,505 | 1425,510 1440,550 | 1445,950 1465,970 1510,962 1568,973 | 385,380 410,390`,
    border: `75,418 285,430 | 365,495 400,545 | 410,590 412,650 600,655 800,658 1005,660 1110,765 1200,860 1320,990 1450,1146`,
    range: `285,460 270,480 285,498 | 310,475 335,458`
  },
  { s: se,
    park: `1110,30 1200,40 1240,0 1320,0 1300,60 1290,120 1250,105 1200,110 1165,75 1160,115 1120,110 1130,80 1095,80 | 1280,280 1345,240 1370,280 1325,300 | 760,510 830,485 880,492 920,560 940,640 1010,680 900,712 830,740 810,690 830,600 760,600 | 930,580 980,570 1005,600 1000,660 940,640 | 615,550 660,505 725,545 680,570 725,620 625,620 | 400,690 485,740 397,742 | 450,830 485,795 545,820 545,880 525,922 480,905 470,870 450,870 | 20,712 55,680 108,712 60,730 45,758 8,742 | 75,790 105,790 105,815 | 1008,365 1026,362 1028,378 1010,380 | 1440,100 1510,80 1510,145 1440,170`,
    marsh: `1415,10 1510,15 1510,80 1420,70 | 1310,10 1370,5 1350,100 1310,110 1290,60`,
    water: `1510,140 1480,130 1450,190 1415,225 1395,210 1400,240 1370,270 1330,300 1265,280 1250,295 1190,262 1175,240 1165,145 1140,150 1120,170 1080,175 1030,195 1055,185 1080,200 1065,235 1090,250 1080,270 1050,280 1000,262 930,235 905,222 845,160 855,185 960,260 1010,290 965,270 980,310 1010,300 1080,312 1075,335 1110,318 1152,340 1130,355 1152,385 1110,395 1120,420 1080,440 1085,475 1040,500 980,552 910,505 850,430 870,480 925,565 1000,588 1010,570 1060,545 1060,590 1070,535 1110,535 1195,575 1170,510 1175,480 1200,570 1225,550 1230,525 1245,525 1260,560 1190,620 1200,640 1170,690 1125,790 1120,800 1110,735 1040,720 960,735 900,725 860,752 805,755 780,785 725,820 700,830 690,850 620,880 545,945 520,990 460,1060 430,1100 415,1146 1510,1146 | 1240,180 1260,170 1330,155 1370,180 1355,205 1300,225 1245,215 | 1212,90 1230,82 1240,98 1220,110 | 1135,0 1195,0 1190,28 1150,35 1130,15 | 1380,0 1418,0 1400,90 1380,95 | 650,715 665,715 692,775 690,825 650,805 675,780 | 810,690 830,745 810,720 | 58,990 85,985 98,1018 70,1015 | 615,325 640,305 | 720,322 770,370 | 255,40 280,60 | 260,295 300,280 | 425,378 495,380 | 660,458 695,492 | 400,680 395,710 | 430,900 445,820 440,870 | 845,612 880,600 868,625 | 70,175 110,185`,
    stream: `525,228 580,250 | 1100,118 1125,132`,
    sand: `1165,480 1178,490 1175,550 1145,540 1150,500`,
    land: `1125,800 1160,740 1200,660 1225,640 1160,730 | 960,730 1040,726 1040,732 | 830,765 870,752 865,760`,
    road: `0,40 40,60 | 135,130 165,145 190,180 235,215 270,215 310,235 | 145,225 168,360 182,430 175,520 185,560 215,600 215,630 240,665 245,705 290,770 295,800 315,840 325,920 350,990 | 370,90 290,130 | 190,170 240,150 | 600,0 550,120 | 568,130 560,170 545,205 525,225 430,235 410,250 | 685,100 635,155 560,170 | 525,230 535,350 | 525,230 578,320 570,370 540,440 542,540 565,585 | 485,345 540,350 610,383 640,382 | 350,260 345,290 325,320 295,335 225,335 165,365 90,395 0,415 | 340,265 385,270 395,300 440,325 | 330,320 318,385 285,440 285,490 300,520 345,550 375,555 450,575 585,590 595,630 | 40,355 100,400 140,455 180,530 | 0,525 85,562 135,535 185,530 235,540 280,535 | 185,540 165,630 90,735 90,755 35,765 0,850 | 0,780 45,790 110,845 140,895 210,945 300,1020 | 300,525 320,600 345,690 380,740 | 375,560 345,580 | 35,973 135,970 190,980 | 700,110 790,112 820,130 845,160 930,185 1025,172 1060,140 1075,160 1165,140 1175,215 1210,225 1240,245 1270,230 1340,235 1395,200 1445,140 1455,100 1480,100 1510,120 | 843,0 843,150 800,305 860,440 | 685,0 690,85 | 860,470 920,590 945,650 990,705 | 778,488 753,550 755,605 700,650 665,680 | 670,700 715,718 795,725 830,742 905,712 1060,718 1080,680 | 630,700 630,760 620,820 600,850 480,970 | 1195,600 1175,660`,
    lane: `285,455 365,405 | 535,320 560,310 | 178,520 210,500 225,460`,
    highway: `345,0 345,40 370,70 355,135 352,260 | 370,75 410,80 440,75 470,80 505,112 555,115 580,125 650,122 665,90 | 345,40 300,95 280,135 185,185 80,258 | 30,0 45,60 45,160 75,260 | 45,105 135,130 | 265,0 345,35 | 95,290 125,310 155,365 200,400 | 258,470 280,530 345,590 355,655 378,695 382,765 415,860 417,920 408,960 | 0,390 30,340 | 315,240 415,260 445,325 480,338 | 640,382 700,425 740,425 800,445 870,458 | 800,445 778,488 | 0,965 35,973 | 308,1146 308,1025 350,1045 380,1045 430,1040 | 625,690 655,712 672,680`
  }
];

const route = document.getElementById('route-map');
const each = fn => carolinas.forEach(fn);
each(m => fill(route, m.s, m.park, '#cae6a2'));
each(m => fill(route, m.s, m.shade, '#bcd99a'));
each(m => fill(route, m.s, m.marsh, '#dbe5d3'));
each(m => fill(route, m.s, m.sand, '#dcdccf'));
each(m => fill(route, m.s, m.water, '#a3ccff'));
each(m => stroke(route, m.s, m.stream, '#a3ccff', 2));
each(m => fill(route, m.s, m.land, '#f2f1ed'));
each(m => stroke(route, m.s, m.border, '#9e9e9e', 2, '20 8'));
each(m => stroke(route, m.s, m.range, '#9e9e9e', 2));
each(m => stroke(route, m.s, m.lane, '#ecd9a3', 1.5));
each(m => stroke(route, m.s, m.road, '#e6cc82', 2.3));
each(m => stroke(route, m.s, m.highway, '#e7b36f', 6));
each(m => stroke(route, m.s, m.highway, '#ffd297', 4.4));

// circles mark towns: [x, y, radius]
[[1507,1095,4.5],[1452,1361,5],[1535,1367,5],[1697,1385,5],[1745,1432,5],[1970,1105,3.5],[2138,1137,5],[2173,1191,5],[2229,1190,5],[1899,1397,4.5],[1876,1446,4.5],[1976,1470,4.5],[2035,1583,3.5],[1965,1661,4.5],[2093,1668,4],[1871,1778,5],[1701,1595,5],[1343,1556,6],[1310,1624,4.5],[1252,1443,3.5],[1540,1785,4.5]]
  .forEach(([cx, cy, r]) => el(route, 'circle', { cx, cy, r, fill: '#f4f4f2', stroke: '#333', 'stroke-width': 2 }));

function town(x, y, size, text, extra) {
  el(route, 'text', Object.assign({ x, y, 'font-size': size, fill: '#2b2822', stroke: '#f7f6f3', 'stroke-width': 5, 'stroke-linejoin': 'round', 'stroke-opacity': .85, 'paint-order': 'stroke' }, extra), text);
}
const region = { fill: '#9c917a', 'letter-spacing': 8, 'font-weight': 500 };
town(1689, 1077, 35, 'VIRGINIA', region);
town(1514, 1442, 35, 'NORTH', region);
town(1475, 1479, 35, 'CAROLINA', region);
[[1461,1084,24,'Roanoke'],[1433,1129,22,'burg'],[1276,1370,25,'Winston-Salem'],[1471,1354,25,'Greensboro'],[1653,1373,25,'Durham'],[1704,1421,24,'Raleigh'],[1916,1096,22,'Petersburg'],[2057,1125,25,'Newport News'],[2132,1178,25,'Norfolk'],[2237,1199,24,'Vi'],[1835,1387,22,'Rocky Mount'],[1844,1436,22,'Wilson'],[2243,1383,20,'Na'],[1925,1459,22,'Greenville'],[1992,1574,20,'New Bern'],[1905,1651,22,'Jacksonville'],[2028,1659,20,'Morehead City'],[1808,1767,25,'Wilmington'],[1638,1584,24,'Fayetteville'],[1318,1632,22,'Rock Hill'],[1498,1774,22,'Florence']]
  .forEach(t => town(...t));
town(1284, 1543, 29, 'Charlotte', { 'font-weight': 500 });
town(1272, 1626, 22, 'nburg', { 'text-anchor': 'end' });
town(1246, 1451, 20, 'ory', { 'text-anchor': 'end' });

const blue = ['#3b78c9', '#d9635f', '#fff'];
[['40',1626,1367],['85',1745,1327],['85',1862,1203],['64',2087,1071],['87',1808,1418],['95',1757,1532],['40',1821,1575],['40',1281,1445],['77',1313,1706],['81',1222,1195]]
  .forEach(([t, x, y]) => shield(route, x, y, t, 32, 18, blue));
shield(route, 1358, 1593, '485', 46, 18, blue);

const logo = el(route, 'text', { class: 'logo', x: 1240, y: 1796, 'font-size': 39, stroke: '#f7f6f3', 'stroke-width': 5, 'stroke-linejoin': 'round', 'paint-order': 'stroke' });
[['G', '#4285f4'], ['o', '#ea4335'], ['o', '#fbbc05'], ['g', '#4285f4'], ['l', '#34a853'], ['e', '#ea4335']]
  .forEach(([c, color]) => el(logo, 'tspan', { fill: color }, c));
```
